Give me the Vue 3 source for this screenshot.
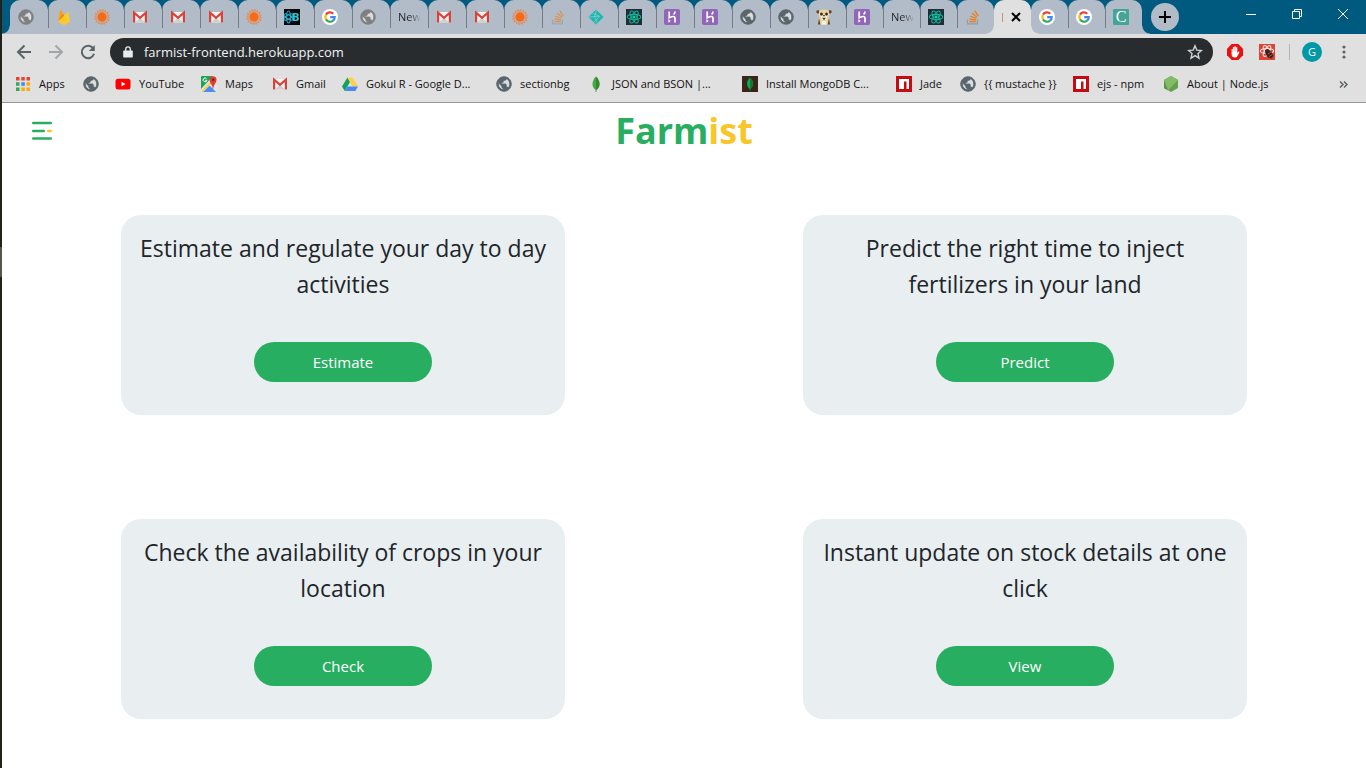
<script setup>
import { ref } from 'vue'

const tabs = [
  'globe', 'firebase', 'sun', 'gmail', 'gmail', 'gmail', 'sun', 'bee', 'google', 'globe',
  'New', 'gmail', 'gmail', 'sun', 'stack', 'netlify', 'react', 'heroku', 'heroku', 'globe',
  'globe', 'meerkat', 'heroku', 'New', 'react', 'stack', 'active', 'google', 'google', 'cup',
].map((icon, i) => ({
  icon,
  label: icon === 'New' ? 'New Tab' : icon === 'active' ? 'Farmist' : icon,
  muted: icon === 'globe' && i < 12,
  faded: icon === 'stack' && i < 20,
}))

const bookmarks = [
  { icon: 'apps', text: 'Apps' },
  { icon: 'globe', text: '' },
  { icon: 'youtube', text: 'YouTube' },
  { icon: 'maps', text: 'Maps' },
  { icon: 'gmail', text: 'Gmail' },
  { icon: 'drive', text: 'Gokul R - Google D...' },
  { icon: 'globe', text: 'sectionbg' },
  { icon: 'leaf', text: 'JSON and BSON |...' },
  { icon: 'mongo', text: 'Install MongoDB C...' },
  { icon: 'npm', text: 'Jade' },
  { icon: 'globe', text: '{{ mustache }}' },
  { icon: 'npm', text: 'ejs - npm' },
  { icon: 'node', text: 'About | Node.js' },
]

const cards = [
  { text: 'Estimate and regulate your day to day activities', action: 'Estimate' },
  { text: 'Predict the right time to inject fertilizers in your land', action: 'Predict' },
  { text: 'Check the availability of crops in your location', action: 'Check' },
  { text: 'Instant update on stock details at one click', action: 'View' },
]

const address = ref('farmist-frontend.herokuapp.com')
</script>

<template>
  <div class="screen">
    <svg class="sprite" aria-hidden="true">
      <symbol id="globe" viewBox="1 1 22 22">
        <circle cx="12" cy="12" r="8.6" fill="#dadddf" />
        <path fill="currentColor" stroke="currentColor" stroke-width="1.2" d="M12 2C6.48 2 2 6.48 2 12s4.48 10 10 10 10-4.48 10-10S17.52 2 12 2zm-1 17.93c-3.95-.49-7-3.85-7-7.93 0-.62.08-1.21.21-1.79L9 15v1c0 1.1.9 2 2 2v1.93zm6.9-2.54c-.26-.81-1-1.39-1.9-1.39h-1v-3c0-.55-.45-1-1-1H8v-2h2c.55 0 1-.45 1-1V7h2c1.1 0 2-.9 2-2v-.41c2.93 1.19 5 4.06 5 7.41 0 2.08-.8 3.97-2.1 5.39z" />
      </symbol>
      <symbol id="firebase" viewBox="0 0 16 16">
        <path fill="#ffa000" d="M2 12.5 4.200 1.200q.3-.7.800 0l2 3.500z" />
        <path fill="#f57c00" d="m2 12.5 5-7.700 1.800 3z" />
        <path fill="#ffca28" d="M2 12.5 11.600 3.200q.6-.4.800.3L14 12.700 8.600 15.700q-.6.300-1.200 0z" />
      </symbol>
      <symbol id="sun" viewBox="0 0 16 16">
        <circle cx="8" cy="8" r="4.700" fill="#f96a14" />
        <circle cx="8" cy="8" r="6.200" fill="none" stroke="#f4803a" stroke-width=".9" />
        <circle cx="8" cy="8" r="7.200" fill="none" stroke="#f4803a" stroke-width="1.200" stroke-dasharray="1.200 1.630" />
      </symbol>
      <symbol id="gmail" viewBox="0 0 16 16">
        <path fill="#f2f2f2" d="M1 3h14v10.500H1z" />
        <path fill="#d0d0d0" d="m3 13.500 5-5 5 5z" />
        <path fill="none" stroke="#d8443a" stroke-width="2.200" d="M2.100 13.500V3.600L8 8.800l5.900-5.200v9.900" />
      </symbol>
      <symbol id="bee" viewBox="0 0 16 16">
        <path fill="#050808" d="M0 0h16v16H0z" />
        <g fill="none" stroke="#24a9c4" stroke-width="1.200">
          <ellipse cx="4.500" cy="8" rx="2" ry="6" />
          <ellipse cx="4.500" cy="8" rx="2" ry="5" transform="rotate(60 4.500 8)" />
          <ellipse cx="4.500" cy="8" rx="2" ry="5" transform="rotate(-60 4.500 8)" />
        </g>
      </symbol>
      <symbol id="google" viewBox="0 0 16 16">
        <circle cx="8" cy="8" r="8" fill="#fff" />
        <g fill="none" stroke-width="2.200">
          <path stroke="#ea4335" d="M4 5.600A4.700 4.700 0 0 1 11.300 4.700" />
          <path stroke="#fbbc05" d="M4 10.400a4.700 4.700 0 0 1 0-4.800" />
          <path stroke="#34a853" d="M11.100 11.600A4.700 4.700 0 0 1 4 10.400" />
          <path stroke="#4285f4" d="M8.200 8.200h4.500a4.700 4.700 0 0 1-1.600 3.400" />
        </g>
      </symbol>
      <symbol id="stack" viewBox="0 0 16 16">
        <path fill="none" stroke="#9a9a9a" stroke-width="1.200" d="M2.500 10.500v4.300h10v-4.300" />
        <path stroke="#ef7c24" stroke-width="1.300" d="M4.300 12.500h6.500M4.500 9.900l6.400 1M5.300 7.100l6 2.400M7 4.100l5 4.200M9.800 1.600l3.400 5.600" />
      </symbol>
      <symbol id="netlify" viewBox="0 0 16 16">
        <path fill="#20b6ad" d="m8 .4 7.600 7.600L8 15.600.4 8z" />
        <path fill="none" stroke="#8fd0d0" stroke-width=".7" d="m4.500 4.200 7 3-5 5.600M.8 8l10.700-.8M8.500 1l-2 6.600 3 7" />
      </symbol>
      <symbol id="react" viewBox="0 0 16 16">
        <path fill="#222c37" d="M0 0h16v16H0z" />
        <g fill="none" stroke="#0db295" stroke-width="1.100">
          <ellipse cx="8" cy="8" rx="6.700" ry="2.600" />
          <ellipse cx="8" cy="8" rx="6.700" ry="2.600" transform="rotate(60 8 8)" />
          <ellipse cx="8" cy="8" rx="6.700" ry="2.600" transform="rotate(120 8 8)" />
        </g>
        <circle cx="8" cy="8" r="1.600" fill="#12cfae" />
      </symbol>
      <symbol id="heroku" viewBox="0 0 16 16">
        <rect width="16" height="16" rx="2" fill="#9165b8" />
        <path fill="none" stroke="#fff" stroke-width="1.700" d="M5.200 2.500v6.200Q11 6.200 11 9v4.500M11 2.500q0 1.700-1.400 3" />
        <path fill="#fff" d="m4.400 10 2.300 1.900-2.300 1.900z" />
      </symbol>
      <symbol id="meerkat" viewBox="0 0 16 16">
        <path fill="#e6d3a0" d="M2.500 5Q2.500 .5 8 .5t5.500 4.500q0 3-1.500 5l1 5.500H3l1-5.500Q2.500 8 2.500 5z" />
        <path fill="#fff3d8" d="M5 6.500h6L10 11H6z" />
        <path fill="#6a4022" d="M.2 2.500q.6-1.700 2.800-1L3 4.200 1.200 4.600zM15.800 2.500q-.6-1.700-2.800-1L13 4.200l1.800.4zM3 9.500 4.500 15.500H2zM13 9.500 11.500 15.500H14z" />
        <ellipse cx="5.500" cy="5" rx="1.400" ry="1.600" fill="#33241b" />
        <ellipse cx="10.500" cy="5" rx="1.400" ry="1.600" fill="#33241b" />
        <path fill="#1e1613" d="M6.800 6.300h2.400L8 7.800zM6.200 8.700h3.600l-1.800 2.600z" />
        <path fill="#d8504a" d="M7.200 9.300h1.600L8 10.900z" />
        <path fill="#fff8e0" d="M6 12h4l.5 3.500h-5z" />
      </symbol>
      <symbol id="apps" viewBox="0 0 16 16">
        <path fill="#ea4335" d="M1 1h3.500v3.500H1zM6.300 1h3.500v3.500H6.300zM11.500 1H15v3.500h-3.500z" />
        <path fill="#34a853" d="M1 6.300h3.500v3.500H1zM1 11.500h3.500V15H1z" />
        <path fill="#4285f4" d="M6.300 6.300h3.500v3.500H6.300z" />
        <path fill="#fbab05" d="M11.500 6.300H15v3.500h-3.500zM6.300 11.500h3.500V15H6.300zM11.500 11.500H15V15h-3.500z" />
      </symbol>
      <symbol id="youtube" viewBox="0 0 16 16">
        <rect x=".5" y="2.700" width="15" height="10.800" rx="2.500" fill="#f00" />
        <path fill="#fff" d="m6.500 5.700 4 2.400-4 2.400z" />
      </symbol>
      <symbol id="maps" viewBox="0 0 16 16">
        <rect width="16" height="16" rx="1" fill="#e4e4e4" />
        <path fill="#23a455" d="M0 1q0-1 1-1h11L0 13z" />
        <path fill="#4a8cf6" d="m2 16 6.500-6.500L15 16z" />
        <path fill="none" stroke="#fbd14b" stroke-width="1.800" d="M1 15.500 10.500 6" />
        <path fill="#e23b35" d="M12 14q-.3-4.500-2.500-7-2-4 .3-6Q12-.5 14.500 1q2 2 .3 5.500Q12.600 9 12 14z" />
        <circle cx="12.200" cy="3.800" r="1.200" fill="#7b1c18" />
        <path fill="none" stroke="#fff" stroke-width="1" d="M5.600 2.800a1.900 1.900 0 1 0 .3 1.500H4.200" />
      </symbol>
      <symbol id="drive" viewBox="0 0 16 16">
        <path fill="#12a25c" d="M5.400 1.500 8 6 2.700 15 0 10.500z" />
        <path fill="#ffcf48" d="M5.400 1.500h5.200L16 10.500h-5.300z" />
        <path fill="#4688f2" d="M5.400 10.500H16L13.300 15H2.700z" />
      </symbol>
      <symbol id="leaf" viewBox="0 0 16 16">
        <path fill="#4aa53d" d="M8 .5Q11.500 4 11.500 8T8 14Q4.500 12 4.500 8T8 .5z" />
        <path fill="#2f8a35" d="M8 .5Q11.500 4 11.500 8T8 14zM7.600 13.500h.8V16h-.8z" />
      </symbol>
      <symbol id="mongo" viewBox="0 0 16 16">
        <path fill="#3a2618" d="M0 0h16v16H0z" />
        <path fill="#13aa4f" d="M8 1.500q3 3 3 6.300T8 13.500Q5 11 5 7.800T8 1.500z" />
        <path fill="#0b7a38" d="M8 1.500q3 3 3 6.300T8 13.500zM7.600 13h.8v2h-.8z" />
      </symbol>
      <symbol id="npm" viewBox="0 0 16 16">
        <path fill="#c60b12" d="M0 0h16v16H0z" />
        <path fill="#fff" d="M3 3h10v10h-2.500V5.500H8V13H3z" />
      </symbol>
      <symbol id="node" viewBox="0 0 16 16">
        <path fill="#689f4e" d="m8 0 7 4v8l-7 4-7-4V4z" />
        <path fill="#83bb66" d="m8 0 7 4L5 14.300 1 12V4z" />
        <path fill="#5a964a" d="m1 4 4 10.300L1 12z" />
      </symbol>
      <symbol id="hand" viewBox="0 0 16 16">
        <path fill="#e8110f" d="M4.700 0h6.600L16 4.700v6.600L11.300 16H4.700L0 11.300V4.700z" />
        <path fill="#fff" d="M4.600 5.200q.6-.6 1.100 0V8h.2V3.200q.6-.7 1.300 0V7.500h.2V2.600q.7-.7 1.400 0v4.900H9V3.400q.7-.7 1.300 0v5.700l1-1.300q.9-.5 1.200.1l-2 4Q10 13.500 8 13.500q-3.400 0-3.400-3.300z" />
      </symbol>
      <symbol id="tool" viewBox="0 0 16 16">
        <path fill="#dc4535" d="M0 0h16v16H0z" />
        <g fill="none" stroke="#f8dedb" stroke-width="1.100">
          <ellipse cx="8" cy="7" rx="6.600" ry="2.400" />
          <ellipse cx="8" cy="7" rx="6" ry="2.400" transform="rotate(60 8 7)" />
          <ellipse cx="8" cy="7" rx="6" ry="2.400" transform="rotate(120 8 7)" />
        </g>
        <path fill="#352421" d="m6 6 3-1 3 2.500 2.500 3.500-1.500 3.500-4-1L6.500 10z" />
        <path stroke="#dc4535" d="m9 10 3-2M10 12.500l3.500-2" />
      </symbol>
    </svg>

    <header class="browser">
      <nav class="tabstrip" aria-label="Open tabs">
        <div class="tabs">
          <button
            v-for="(tab, i) in tabs"
            :key="i"
            type="button"
            class="tab"
            :class="{ active: tab.icon === 'active', narrow: i > 21, before: tabs[i + 1]?.icon === 'active', after: tabs[i - 1]?.icon === 'active' }"
            :aria-label="tab.label"
          >
            <span v-if="tab.icon === 'New'" class="tab-text">New</span>
            <span v-else-if="tab.icon === 'cup'" class="cup">C</span>
            <template v-else-if="tab.icon === 'active'">
              <span class="tab-sliver"></span>
              <svg class="tab-close" viewBox="0 0 10 10"><path d="m1 1 8 8M9 1 1 9" /></svg>
            </template>
            <template v-else>
              <svg class="favicon" :class="{ muted: tab.muted, faded: tab.faded }"><use :href="'#' + tab.icon" /></svg>
              <span v-if="tab.icon === 'bee'" class="bee-letter">B</span>
            </template>
          </button>
        </div>
        <button type="button" class="new-tab" aria-label="New tab">
          <svg viewBox="0 0 12 12"><path d="M6 0v12M0 6h12" /></svg>
        </button>
        <div class="window-controls">
          <button type="button" aria-label="Minimize"><svg viewBox="0 0 12 12"><path d="M1 6.500h10" /></svg></button>
          <button type="button" aria-label="Restore"><svg viewBox="0 0 12 12"><path d="M1.500 3.500h7v7h-7zM3.500 3.500v-2h7v7h-2" /></svg></button>
          <button type="button" aria-label="Close"><svg viewBox="0 0 12 12"><path d="m1 1 10 10M11 1 1 11" /></svg></button>
        </div>
      </nav>

      <div class="toolbar">
        <button type="button" class="nav-button" aria-label="Back"><svg viewBox="0 0 16 16"><path d="M15 8H2M8.500 1.500 2 8l6.500 6.500" /></svg></button>
        <button type="button" class="nav-button off" aria-label="Forward"><svg viewBox="0 0 16 16"><path d="M1 8h13M7.500 1.500 14 8l-6.500 6.500" /></svg></button>
        <button type="button" class="nav-button" aria-label="Reload"><svg viewBox="0 0 16 16"><path d="M13 4.200A6.200 6.200 0 1 0 14 9.800" /><path class="solid" d="M14.800 1v6H8.800z" /></svg></button>
        <div class="omnibox">
          <svg class="lock" viewBox="0 0 10 12"><path fill="#e8eaed" d="M1 4.500h8q.8 0 .8.800v5.400q0 .8-.8.800H1q-.8 0-.8-.8V5.300q0-.8.8-.8z" /><path fill="none" stroke="#e8eaed" stroke-width="1.300" d="M2.700 5V3.200a2.300 2.300 0 0 1 4.600 0V5" /></svg>
          <input v-model="address" type="text" aria-label="Address" spellcheck="false" />
          <button type="button" class="star" aria-label="Bookmark this page">
            <svg viewBox="0 0 16 16"><path d="m8 1.800 1.800 4.300 4.700.4L11 9.600l1 4.600-4-2.500-4 2.500 1-4.600-3.500-3.100 4.700-.4z" /></svg>
          </button>
        </div>
        <div class="extensions">
          <button type="button" aria-label="Blocker"><svg class="favicon"><use href="#hand" /></svg></button>
          <button type="button" aria-label="Developer tools"><svg class="favicon"><use href="#tool" /></svg></button>
          <span class="divider"></span>
          <button type="button" class="avatar" aria-label="Profile">G</button>
          <button type="button" class="menu" aria-label="Menu"><svg viewBox="0 0 4 16"><circle cx="2" cy="3" r="1.600" /><circle cx="2" cy="8" r="1.600" /><circle cx="2" cy="13" r="1.600" /></svg></button>
        </div>
      </div>

      <nav class="bookmarks" aria-label="Bookmarks">
        <a v-for="(mark, i) in bookmarks" :key="i" href="#" :aria-label="mark.text || 'Bookmark'">
          <svg class="favicon"><use :href="'#' + mark.icon" /></svg>
          <span v-if="mark.text">{{ mark.text }}</span>
        </a>
        <button type="button" class="more" aria-label="More bookmarks">
          <svg viewBox="0 0 9 7"><path d="m1 .5 3 3-3 3M5 .5l3 3-3 3" /></svg>
        </button>
      </nav>
    </header>

    <main class="page">
      <div class="page-head">
        <button type="button" class="burger" aria-label="Open menu">
          <svg viewBox="0 0 20 20"><path d="M1.200 2h17.600M1.200 10h10.600M1.200 17.500h17.600" /><path class="accent" d="M16.300 10h2.500" /></svg>
        </button>
        <h1>Farm<span>ist</span></h1>
      </div>
      <div class="cards">
        <section v-for="card in cards" :key="card.action" class="card">
          <p>{{ card.text }}</p>
          <button type="button">{{ card.action }}</button>
        </section>
      </div>
    </main>
  </div>
</template>

<style>
body {
  margin: 0;
  background: #fff;
}
</style>

<style scoped>
.screen {
  min-height: 100vh;
  box-sizing: border-box;
  padding-left: 2px;
  background: linear-gradient(#20231c 247px, #55564c 247px, #55564c 277px, #20231c 277px) 0 0 / 2px 100% no-repeat;
  font-family: "Open Sans", "Noto Sans", sans-serif;
  color: #212529;
}
button {
  border: 0;
  padding: 0;
  margin: 0;
  background: none;
  font: inherit;
  color: inherit;
}
svg {
  display: block;
}
.sprite {
  display: none;
}
.favicon {
  width: 16px;
  height: 16px;
  flex: none;
  color: #59656a;
}
.favicon.muted {
  color: #7f7f7f;
}
.favicon.faded {
  opacity: 0.65;
}
.browser {
  background: #e0e0e0;
  border-bottom: 1px solid #999;
}

.tabstrip {
  display: flex;
  height: 34px;
  background: #005a80;
}
.tabs {
  display: flex;
  padding-left: 8px;
}
.tab {
  position: relative;
  display: flex;
  align-items: center;
  width: 38px;
  height: 34px;
  padding-left: 8px;
  background: #b1bcc8;
  border-radius: 10px 10px 0 0;
}
.tab.narrow {
  width: 37px;
}
.tab:not(:first-child)::before {
  content: "";
  position: absolute;
  left: 0;
  top: 8px;
  width: 1px;
  height: 20px;
  background: #767c83;
}
.tab.active::before,
.tab.after::before {
  display: none;
}
.tab:first-child::after,
.tab:last-child::after,
.tab.before::after,
.tab.after::after {
  content: "";
  position: absolute;
  bottom: 0;
  width: 8px;
  height: 8px;
}
.tab:first-child::after {
  right: 100%;
  background: radial-gradient(circle at 0 0, #005a80 7px, #b1bcc8 8px);
}
.tab:last-child::after {
  left: 100%;
  background: radial-gradient(circle at 100% 0, #005a80 7px, #b1bcc8 8px);
}
.tab.before::after {
  right: 0;
  background: radial-gradient(circle at 0 0, #b1bcc8 7px, #e0e0e0 8px);
}
.tab.after::after {
  left: 0;
  background: radial-gradient(circle at 100% 0, #b1bcc8 7px, #e0e0e0 8px);
}
.tab.active {
  background: #e0e0e0;
  gap: 8px;
}
.tab-text {
  width: 22px;
  font-size: 11px;
  line-height: 16px;
  text-align: left;
  white-space: nowrap;
  color: transparent;
  background: linear-gradient(90deg, #222 50%, rgba(34, 34, 34, 0.1));
  background-clip: text;
}
.tab-sliver {
  width: 1px;
  height: 9px;
  background: #c29a72;
}
.tab-close {
  width: 10px;
  height: 10px;
  fill: none;
  stroke: #000;
  stroke-width: 2;
}
.cup {
  width: 16px;
  height: 16px;
  border-radius: 1px;
  background: #43a497;
  color: #fff;
  font-family: "Liberation Serif", serif;
  font-size: 16px;
  line-height: 16px;
  text-align: center;
}
.bee-letter {
  position: absolute;
  left: 16px;
  font-size: 11px;
  line-height: 16px;
  font-weight: 700;
  color: #39c2dc;
}
.new-tab {
  display: grid;
  place-items: center;
  width: 28px;
  height: 28px;
  margin: 3px 0 0 9px;
  border-radius: 50%;
  background: #b1bcc8;
}
.new-tab svg {
  width: 12px;
  height: 12px;
  stroke: #000;
  stroke-width: 2;
}
.window-controls {
  display: flex;
  align-items: center;
  height: 28px;
  margin-left: auto;
}
.window-controls button {
  display: grid;
  place-items: center;
  width: 46px;
  height: 28px;
}
.window-controls svg {
  width: 12px;
  height: 12px;
  fill: none;
  stroke: #fff;
}

.toolbar {
  display: flex;
  align-items: center;
  height: 28px;
  padding: 4px 16px 4px 14px;
}
.nav-button {
  width: 16px;
  height: 16px;
  margin-right: 16px;
  color: #596467;
}
.nav-button.off {
  color: #a3a6a8;
}
.nav-button svg {
  width: 16px;
  height: 16px;
  fill: none;
  stroke: currentColor;
  stroke-width: 2;
}
.nav-button .solid {
  fill: currentColor;
  stroke: none;
}
.omnibox {
  display: flex;
  align-items: center;
  flex: 1;
  height: 28px;
  box-sizing: border-box;
  padding: 0 10px 0 13px;
  margin-left: -2px;
  border-radius: 14px;
  background: #282c2f;
}
.lock {
  width: 10px;
  height: 12px;
}
.omnibox input {
  flex: 1;
  min-width: 0;
  margin-left: 11px;
  padding: 0;
  border: 0;
  outline: 0;
  background: none;
  font-family: inherit;
  font-size: 13px;
  line-height: 20px;
  color: #f1f3f4;
}
.star svg {
  width: 16px;
  height: 16px;
  fill: none;
  stroke: #d0d2d4;
  stroke-width: 1.4;
}
.extensions {
  display: flex;
  align-items: center;
  gap: 16px;
  margin-left: 14px;
}
.divider {
  width: 1px;
  height: 16px;
  margin: 0 -4px 0 -2px;
  background: #b4b4b4;
}
.avatar {
  width: 20px;
  height: 20px;
  border-radius: 50%;
  background: #0097a7;
  color: #fff;
  font-size: 11px;
  line-height: 20px;
}
.menu {
  width: 12px;
  height: 16px;
}
.menu svg {
  width: 4px;
  height: 16px;
  margin: 0 auto;
  fill: #596467;
}

.bookmarks {
  display: grid;
  grid-template-columns: 68px 32px 86px 71px 70px 154px 92px 154px 154px 64px 113px 90px 1fr auto;
  align-items: center;
  height: 28px;
  padding: 0 18px 4px 13px;
}
.bookmarks a {
  display: flex;
  align-items: center;
  gap: 8px;
  color: #111;
  font-size: 11px;
  line-height: 16px;
  text-decoration: none;
  white-space: nowrap;
}
.more svg {
  width: 9px;
  height: 7px;
  fill: none;
  stroke: #596467;
  stroke-width: 1.5;
}

.page-head {
  display: grid;
  grid-template-columns: 1fr auto 1fr;
  align-items: center;
  height: 56px;
  padding: 0 30px;
}
.burger {
  width: 20px;
  height: 20px;
}
.burger svg {
  width: 20px;
  height: 20px;
  fill: none;
  stroke: #27ae60;
  stroke-width: 2.4;
  stroke-linecap: round;
}
.burger .accent {
  stroke: #f7c72a;
}
h1 {
  margin: 0;
  font-size: 36px;
  line-height: 52px;
  font-weight: 700;
  color: #27ae60;
}
h1 span {
  color: #f7c72a;
}
.cards {
  display: grid;
  grid-template-columns: 1fr 1fr;
  row-gap: 104px;
  justify-items: center;
  padding: 56px 0 49px;
}
.card {
  display: flex;
  flex-direction: column;
  align-items: center;
  width: 65%;
  min-height: 200px;
  box-sizing: border-box;
  padding: 15px 15px 33px;
  border-radius: 20px;
  background: #e9eff1;
  text-align: center;
}
.card p {
  margin: 0 0 40px;
  font-size: 23px;
  line-height: 36px;
}
.card button {
  width: 43%;
  height: 40px;
  border-radius: 20px;
  background: #27ae60;
  color: #fff;
  font-size: 15px;
}
</style>
